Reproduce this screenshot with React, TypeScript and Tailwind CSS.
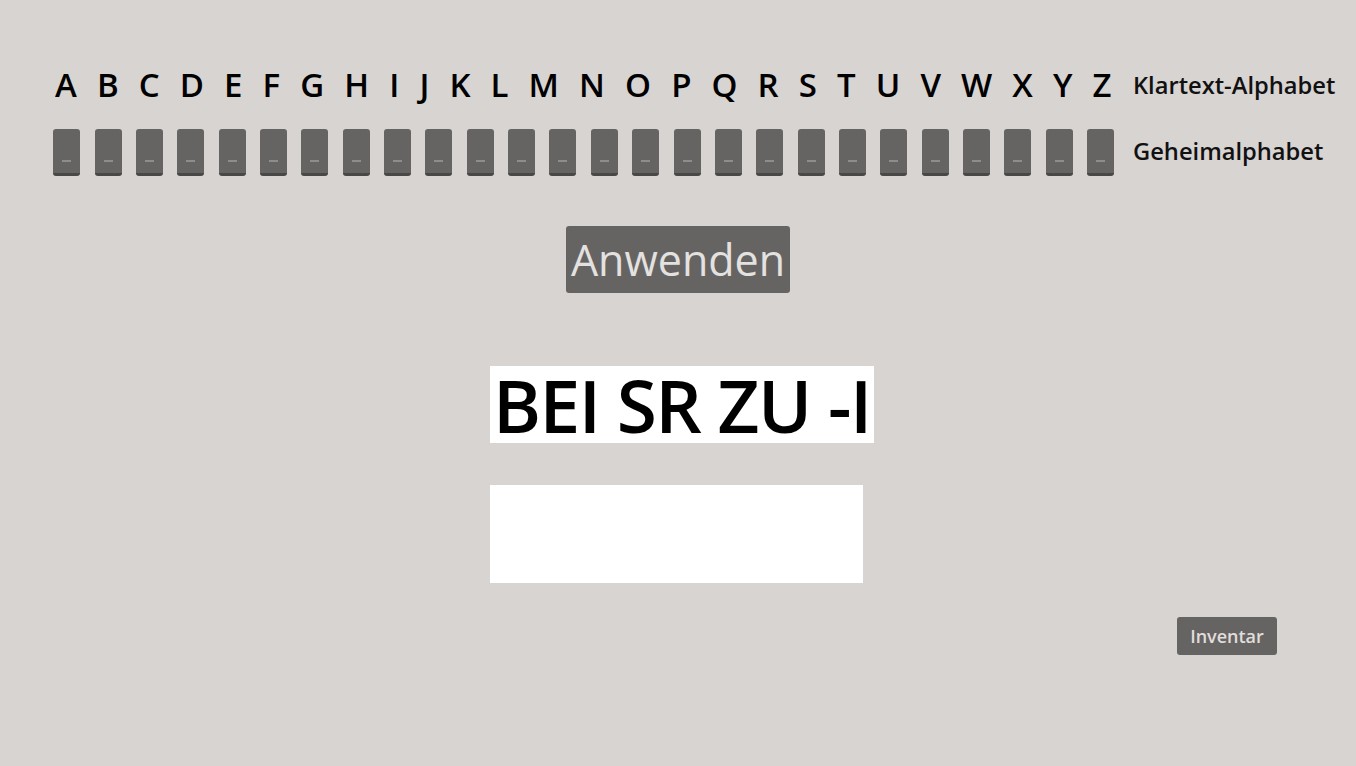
import React from 'react';

const letters = 'ABCDEFGHIJKLMNOPQRSTUVWXYZ'.split('');

const font = { fontFamily: '"Open Sans", "Noto Sans", sans-serif' };

export default function App() {
  return (
    <div className="w-[1356px] h-[766px] bg-[#d8d4d1] overflow-hidden" style={font}>
      {/* alphabet table */}
      <div className="flex pt-[62px] pl-[46px]">
        <div className="flex flex-col w-[1075px]">
          <div className="h-[48px] flex items-center pl-[9px] text-[33px] font-semibold text-black leading-none whitespace-nowrap">
            <span className="flex gap-x-[20.1px] -mt-[3px]">
              {letters.map((l) => (
                <span key={l}>{l}</span>
              ))}
            </span>
          </div>
          <div className="grid grid-cols-[repeat(26,41.36px)] h-[64px]">
            {letters.map((l) => (
              <div key={'k' + l} className="flex justify-center pt-[19px]">
                <div className="w-[27px] h-[47px] rounded-[3px] bg-[#666462] border-b-[3px] border-[#494847] flex items-end justify-center pb-[11px]">
                  <div className="w-[9px] h-[2px] bg-[#8f8d8b]" />
                </div>
              </div>
            ))}
          </div>
        </div>
        <div className="grid grid-rows-[48px_64px] items-center ml-[12px] text-[23.7px] font-semibold text-[#111] leading-none">
          <div className="-mt-[1px]">Klartext-Alphabet</div>
          <div className="pt-[19px]">Geheimalphabet</div>
        </div>
      </div>

      {/* apply */}
      <div className="flex justify-center mt-[52px]">
        <button className="w-[224px] h-[67px] rounded-[3px] bg-[#666462] text-[#e4e2e0] text-[43px] leading-none">
          Anwenden
        </button>
      </div>

      {/* result */}
      <div className="flex flex-col items-start ml-[490px] mt-[73px]">
        <div className="bg-white h-[77px] px-[3px] flex items-center text-[73px] font-semibold text-black leading-none tracking-[-1.6px]">
          BEI SR ZU -I
        </div>
        <div className="bg-white w-[373px] h-[98px] mt-[42px]" />
      </div>

      <div className="flex justify-end pr-[79px] mt-[34px]">
        <button className="w-[100px] h-[38px] rounded-[3px] bg-[#666462] text-[#e0dedc] text-[18px] font-semibold leading-none">
          Inventar
        </button>
      </div>
    </div>
  );
}
